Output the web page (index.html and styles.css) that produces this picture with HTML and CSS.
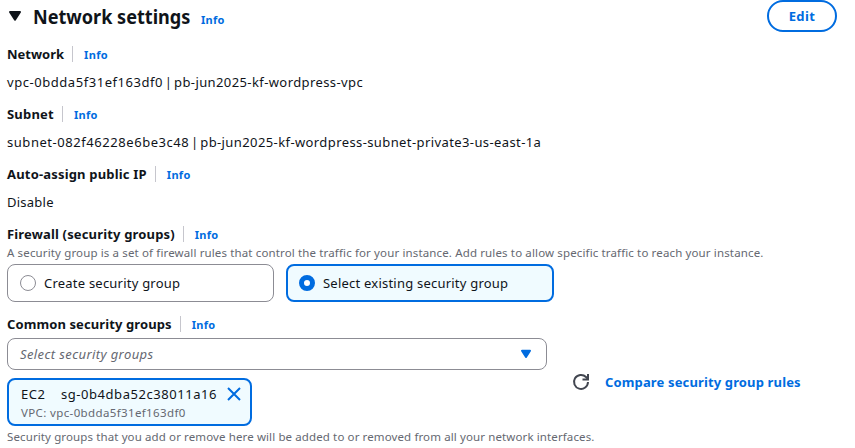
FILE: index.html
```html
<!DOCTYPE html>
<html lang="en">
<head>
<meta charset="utf-8">
<title>Network settings</title>
<link rel="stylesheet" href="styles.css">
</head>
<body>
<main class="panel">
  <header class="header">
    <svg class="caret" width="14" height="12" viewBox="0 0 14 12"><path d="M2 2h10L7 9.7z" fill="#0f141a" stroke="#0f141a" stroke-width="2" stroke-linejoin="round"/></svg>
    <h1 class="title">Network settings</h1>
    <a class="info title-info">Info</a>
    <button class="edit">Edit</button>
  </header>
  <section class="field">
    <div class="label"><span class="name n-network">Network</span><a class="info">Info</a></div>
    <div class="value"><span class="resource-id">vpc-0bdda5f31ef163df0</span> | pb-jun2025-kf-wordpress-vpc</div>
  </section>
  <section class="field">
    <div class="label"><span class="name n-subnet">Subnet</span><a class="info">Info</a></div>
    <div class="value"><span class="resource-id">subnet-082f46228e6be3c48</span> | pb-jun2025-kf-wordpress-subnet-private3-us-east-1a</div>
  </section>
  <section class="field">
    <div class="label"><span class="name n-ip">Auto-assign public IP</span><a class="info">Info</a></div>
    <div class="value v-disable">Disable</div>
  </section>
  <section class="firewall">
    <div class="label"><span class="name n-firewall">Firewall (security groups)</span><a class="info">Info</a></div>
    <p class="hint">A security group is a set of firewall rules that control the traffic for your instance. Add rules to allow specific traffic to reach your instance.</p>
    <div class="tiles">
      <div class="tile"><span class="radio"></span><span>Create security group</span></div>
      <div class="tile selected"><span class="radio"></span><span>Select existing security group</span></div>
    </div>
  </section>
  <section class="groups">
    <div class="label"><span class="name n-common">Common security groups</span><a class="info">Info</a></div>
    <div class="columns">
      <div class="picker">
        <div class="select"><span class="placeholder">Select security groups</span>
          <svg width="12" height="10" viewBox="0 0 12 10"><path d="M2 1.8h8L6 8z" fill="#006ce0" stroke="#006ce0" stroke-width="2" stroke-linejoin="round"/></svg>
        </div>
        <div class="token">
          <div class="token-text">
            <div class="token-main"><span class="ec2">EC2</span><span class="sg">sg-0b4dba52c38011a16</span></div>
            <div class="token-vpc">VPC: vpc-0bdda5f31ef163df0</div>
          </div>
          <svg class="close" width="14" height="14" viewBox="0 0 14 14"><path d="M1 1l12 12M13 1L1 13" stroke="#006ce0" stroke-width="2" fill="none"/></svg>
        </div>
      </div>
      <div class="actions">
        <svg width="18" height="18" viewBox="0 0 18 18" fill="none" stroke="#424650" stroke-width="2"><path d="M16 9a7 7 0 1 1-2-5l2 2.2"/><path d="M16 1v5.5h-5.5"/></svg>
        <a class="compare">Compare security group rules</a>
      </div>
    </div>
    <p class="hint footer">Security groups that you add or remove here will be added to or removed from all your network interfaces.</p>
  </section>
</main>
</body>
</html>
```
FILE: styles.css
```css
* { box-sizing: border-box; }
body { margin: 0; background: #fff; color: #0f141a; font: 13px/20px "Noto Sans", sans-serif; white-space: nowrap; overflow: hidden; }
h1, p { margin: 0; }
.panel { padding: 0 0 0 7px; width: 855px; height: 448px; }
.header { display: flex; height: 32px; align-items: center; }
.caret { margin-left: 1px; margin-right: 11px; }
.title { font-size: 20px; line-height: 24px; font-weight: 700; width: 157px; transform: scaleX(.904); transform-origin: left; padding-top: 1px; }
.info { color: #006ce0; font-size: 11px; font-weight: 700; letter-spacing: .3px; }
.title-info { margin-left: 11px; padding-top: 8px; }
.edit { margin-left: auto; margin-right: 18px; width: 70px; height: 32px; border: 2px solid #006ce0; border-radius: 16px; background: #fff; color: #006ce0; font: 700 13px/20px "Noto Sans", sans-serif; letter-spacing: .4px; padding: 0; }
.field { margin-top: 12px; }
.label { display: flex; height: 20px; align-items: center; }
.name { font-weight: 700; }
.n-subnet { letter-spacing: .2px; }
.n-ip { letter-spacing: .18px; }
.n-firewall { letter-spacing: .16px; }
.n-common { letter-spacing: .1px; }
.label .info { margin-left: 8px; padding-left: 11px; border-left: 1px solid #c6c6cd; height: 16px; line-height: 17px; }
.value { margin-top: 8px; letter-spacing: .4px; word-spacing: -2.1px; }
.resource-id { letter-spacing: .55px; }
.v-disable { letter-spacing: .25px; }
.firewall { margin-top: 12px; }
.hint { color: #656871; font-size: 11.5px; line-height: 18px; letter-spacing: .136px; }
.tiles { display: flex; gap: 12px; margin-top: 2px; letter-spacing: .22px; }
.tile { display: flex; align-items: center; width: 267px; height: 38px; border: 1px solid #8c8c94; border-radius: 8px; padding-left: 12px; gap: 8px; }
.tile.selected { width: 268px; border: 2px solid #006ce0; background: #f0fbff; padding-left: 11px; }
.radio { width: 16px; height: 16px; border: 1px solid #8c8c94; border-radius: 50%; background: #fff; }
.selected .radio { border: 5px solid #006ce0; }
.groups { margin-top: 12px; }
.columns { display: flex; margin-top: 4px; }
.picker { width: 540px; }
.select { height: 32px; border: 1px solid #8c8c94; border-radius: 8px; padding: 0 14px 0 12px; display: flex; align-items: center; justify-content: space-between; }
.placeholder { font-style: italic; color: #656871; letter-spacing: .4px; }
.token { margin-top: 8px; width: 245px; height: 48px; border: 2px solid #006ce0; border-radius: 8px; background: #f0fbff; padding: 4px 9px 0 12px; display: flex; justify-content: space-between; }
.token-main { display: flex; height: 20px; letter-spacing: .55px; }
.ec2 { width: 40px; }
.token-vpc { color: #656871; font-size: 11.5px; line-height: 18px; letter-spacing: .37px; }
.close { margin-top: 3px; }
.actions { display: flex; height: 20px; margin: 34px 0 0 25px; align-items: center; gap: 15px; }
.compare { color: #006ce0; font-weight: 700; letter-spacing: .14px; }
.footer { margin-top: 2px; letter-spacing: .115px; }
```
